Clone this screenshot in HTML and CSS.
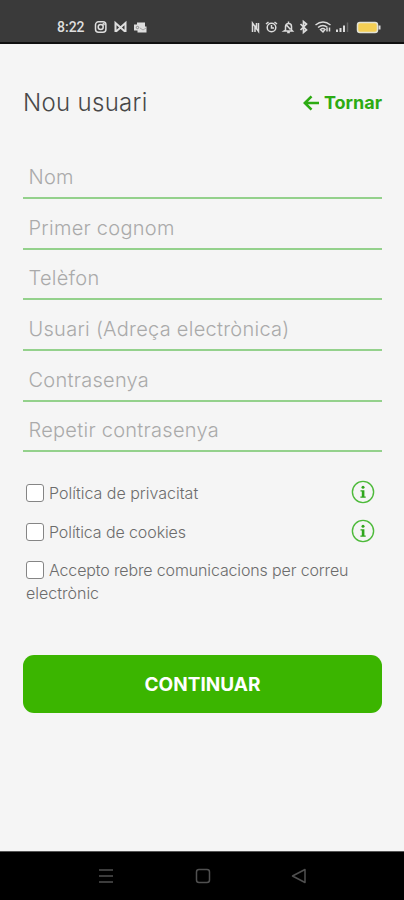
FILE: index.html
```html
<!DOCTYPE html>
<html lang="ca">
<head>
<meta charset="utf-8">
<title>Nou usuari</title>
<link rel="stylesheet" href="styles.css">
</head>
<body>
<div class="status">
  <span class="time">8:22</span>
  <svg class="status-left" width="54" height="14" viewBox="0 0 54 14" fill="none" stroke="#dedede" stroke-width="1.5">
    <rect x="1.5" y="1.8" width="10.4" height="10.4" rx="3"/><circle cx="6.7" cy="7" r="2.5"/><circle cx="9.6" cy="4.2" r=".5"/>
    <path d="M21.500 12V3l5 4.500L31.500 3v9M22 11.500l4.500-4 4.500 4" stroke-width="2"/>
    <path d="M43 2.500h8v4h1.500v6h-9v-2H40v-6h3z" fill="#dedede" stroke="none"/><circle cx="43.500" cy="7.500" r="1.200" stroke="#888" stroke-width="1"/><path d="M46 8l3 2 3-2" stroke="#999" stroke-width=".8"/>
  </svg>
  <svg class="status-right" width="132" height="16" viewBox="0 0 132 16" fill="none" stroke="#dcdcdc" stroke-width="1.500">
    <path d="M2.500 13V4l6 8.500V4M5 6.500V13M6.500 4v6"/>
    <circle cx="21.500" cy="8.500" r="4.300"/><path d="M16 5l2.500-2M27 5l-2.500-2M21.500 6v3H24"/>
    <path d="M35.500 11V7.500a3 3 0 0 1 6 0V11l1 1H34zM38.500 4V2.500M37.200 13.500h2.600M36.500 6l4 4.500"/>
    <path d="M50.500 5l6 6-3 2.500v-11l3 2.500-6 6" stroke-width="1.700"/>
    <path d="M65.500 6q7.500-6 15 0M68 8.500q5-4 9.500 0M70.500 10.500q2.500-2 4.500 0L73 13zM77 12.500V9M79.500 8.500v4"/>
    <path d="M87 13v-2.500M90.500 13V9M94 13V6.500" stroke-width="2"/><path d="M97.500 13V3.500" stroke="#666"/>
    <rect x="107.500" y="3.500" width="20" height="10" rx="2.500" fill="#f4cf55" stroke="#e2e2d5"/><path d="M129.500 6.500v4" stroke-width="2"/>
  </svg>
</div>
<main class="page">
  <header class="head">
    <h1 class="title">Nou usuari</h1>
    <a class="back"><svg width="17" height="16" viewBox="0 0 17 16" fill="none" stroke="#2cab12" stroke-width="2.600"><path d="M16 8H2M8.500 1.300L1.800 8l6.700 6.700"/></svg><span>Tornar</span></a>
  </header>
  <form class="fields">
    <label class="field"><span>Nom</span></label>
    <label class="field"><span>Primer cognom</span></label>
    <label class="field"><span>Telèfon</span></label>
    <label class="field"><span>Usuari (Adreça electrònica)</span></label>
    <label class="field"><span>Contrasenya</span></label>
    <label class="field"><span>Repetir contrasenya</span></label>
  </form>
  <div class="checks">
    <div class="check"><span class="box"></span><span>Política de privacitat</span>
      <svg class="info" width="24" height="24" viewBox="0 0 24 24"><circle cx="12" cy="12" r="10.600" fill="none" stroke="#4dba3a" stroke-width="1.400"/><circle cx="12" cy="7.200" r="1.500" fill="#2fa61c"/><path d="M9.500 10.200h3.900v6.300h1.300v1.200H9.400v-1.200h1.400v-5.100H9.500z" fill="#2fa61c"/></svg></div>
    <div class="check next"><span class="box"></span><span class="cookies">Política de cookies</span>
      <svg class="info" width="24" height="24" viewBox="0 0 24 24"><circle cx="12" cy="12" r="10.600" fill="none" stroke="#4dba3a" stroke-width="1.400"/><circle cx="12" cy="7.200" r="1.500" fill="#2fa61c"/><path d="M9.500 10.200h3.900v6.300h1.300v1.200H9.400v-1.200h1.400v-5.100H9.500z" fill="#2fa61c"/></svg></div>
    <div class="check last"><span class="box"></span><span class="accept">Accepto rebre comunicacions per correu</span></div>
    <div class="rest"><span>electrònic</span></div>
  </div>
  <button class="submit">CONTINUAR</button>
</main>
<nav class="nav">
  <svg width="16" height="16" viewBox="0 0 16 16" fill="none" stroke="#505050" stroke-width="1.700"><path d="M1 2h14M1 8h14M1 14h14"/></svg>
  <svg width="16" height="16" viewBox="0 0 16 16" fill="none" stroke="#505050" stroke-width="1.500"><rect x="1.500" y="1.500" width="13" height="13" rx="2.500"/></svg>
  <svg width="16" height="16" viewBox="0 0 16 16" fill="none" stroke="#505050" stroke-width="1.500" stroke-linejoin="round"><path d="M1.500 8L14 1.500v13z"/></svg>
</nav>
</body>
</html>
```
FILE: styles.css
```css
* { box-sizing: border-box; }
body { margin: 0; width: 404px; height: 900px; display: flex; flex-direction: column; background: #f5f5f5; font-family: Inter, sans-serif; overflow: hidden; }
span { white-space: nowrap; }
svg { display: block; flex: none; }
.status { height: 44px; flex: none; background: #3a3a3a; border-bottom: 2px solid #101010; display: flex; align-items: center; padding: 12px 22px 0 57px; }
.time { width: 37px; font: 500 14px/16px Roboto, sans-serif; color: #dedede; }
.status-right { margin-left: auto; }
.page { height: 807px; flex: none; padding: 43px 22px 0 23px; }
.head { height: 32px; display: flex; align-items: center; justify-content: space-between; }
.title { margin: 0; font-size: 24px; font-weight: 300; line-height: 32px; color: #484848; letter-spacing: 0.3px; }
.back { display: flex; align-items: center; gap: 4px; color: #2cab12; font-size: 18px; font-weight: 700; line-height: 32px; }
.fields { margin-top: 29.500px; display: grid; grid-template-rows: repeat(6, 50.67px); }
.field { border-bottom: 2px solid #94d18c; padding: 13.500px 0 0 5.5px; font-size: 20px; line-height: 30px; font-weight: 300; color: #aaa; letter-spacing: 0.27px; }
.checks { padding: 28.500px 7px 0 3px; font-size: 16px; font-weight: 300; color: #6c6c6c; }
.check { display: flex; align-items: center; height: 24px; gap: 5px; }
.next { margin-top: 15.500px; }
.last { margin-top: 13.500px; }
.cookies { letter-spacing: -0.1px; }
.accept { letter-spacing: -0.14px; }
.box { width: 18px; height: 18px; border: 1px solid #858585; border-radius: 3px; background: #fff; }
.info { margin-left: auto; margin-bottom: 2px; }
.rest { height: 22px; line-height: 22px; }
.submit { display: block; width: 359px; height: 58px; margin-top: 51px; padding: 1px 0 0; border: 0; border-radius: 11px; background: #3bb500; color: #fff; font: 700 19px/57px Inter, sans-serif; }
.nav { height: 49px; flex: none; background: #000; border-top: 1px solid #555; display: flex; justify-content: space-between; align-items: center; padding: 0 97px 0 98px; }
```
